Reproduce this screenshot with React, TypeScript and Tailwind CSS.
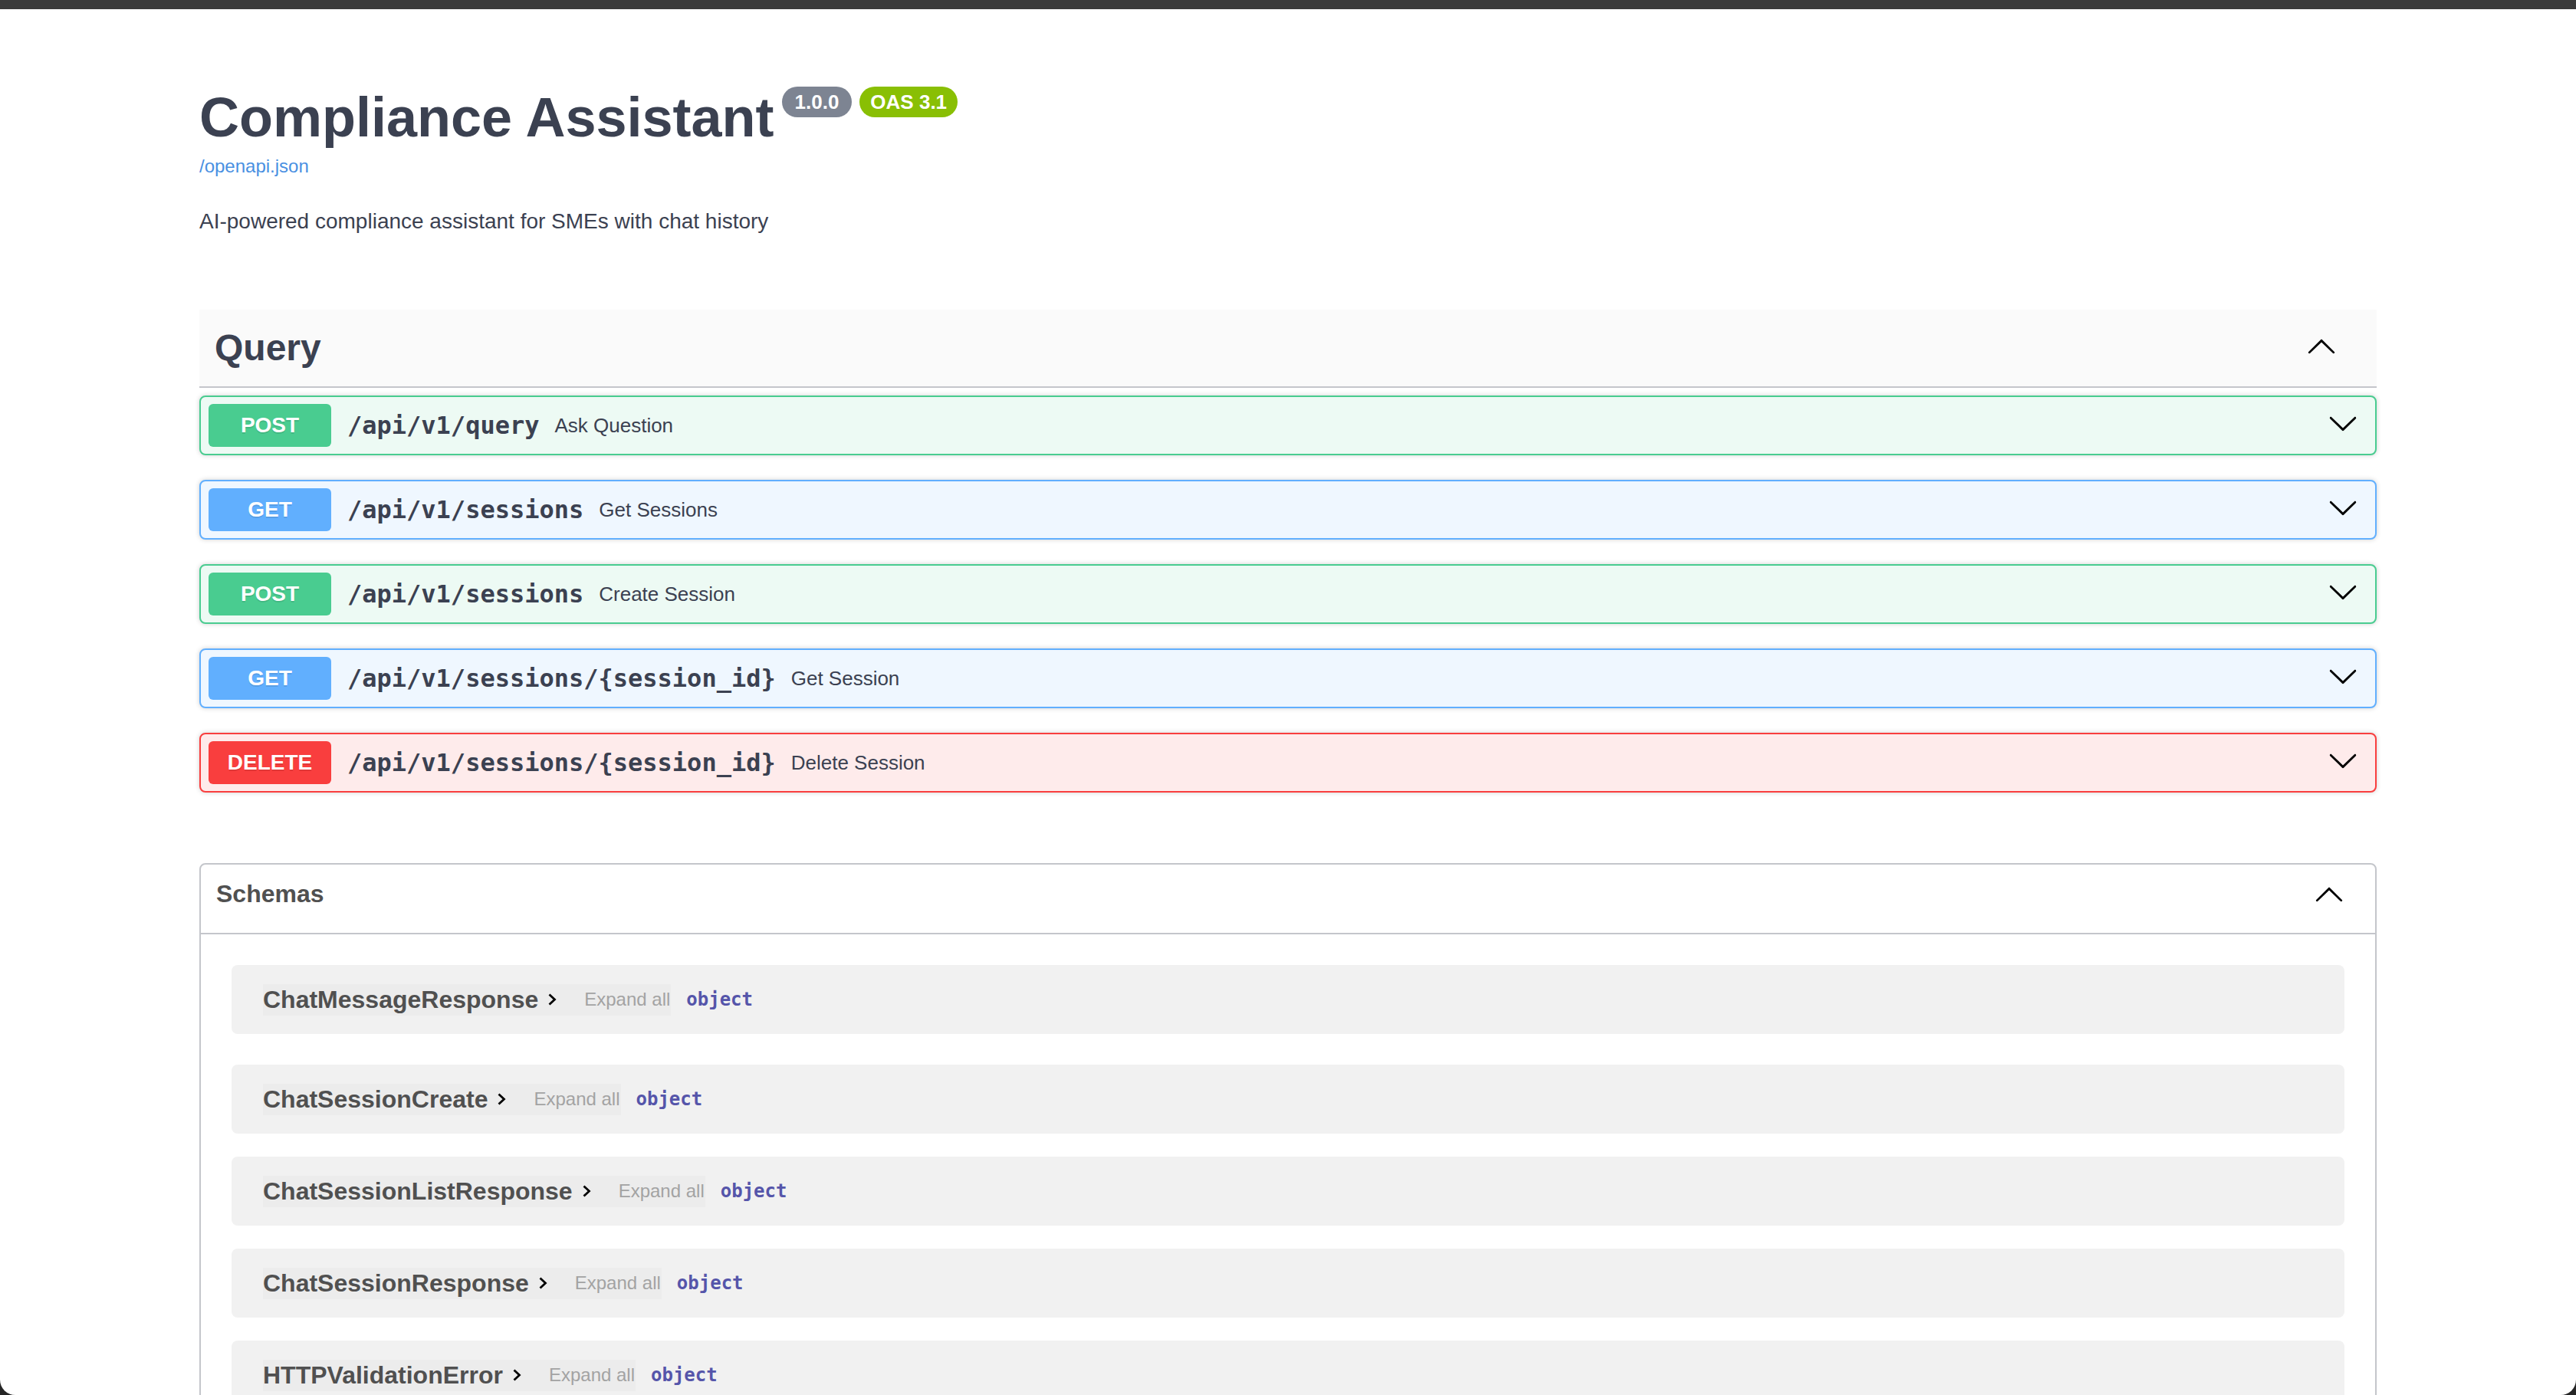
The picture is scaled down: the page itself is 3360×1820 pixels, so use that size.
import React from 'react';

// Swagger-style API docs page
type Method = 'GET' | 'POST' | 'DELETE';

const operations: { method: Method; path: string; summary: string }[] = [
  { method: 'POST', path: '/api/v1/query', summary: 'Ask Question' },
  { method: 'GET', path: '/api/v1/sessions', summary: 'Get Sessions' },
  { method: 'POST', path: '/api/v1/sessions', summary: 'Create Session' },
  { method: 'GET', path: '/api/v1/sessions/{session_id}', summary: 'Get Session' },
  { method: 'DELETE', path: '/api/v1/sessions/{session_id}', summary: 'Delete Session' },
];

const methodStyles: Record<Method, { row: string; badge: string }> = {
  POST: { row: 'border-[#49cc90] bg-[#edfaf4]', badge: 'bg-[#49cc90]' },
  GET: { row: 'border-[#61affe] bg-[#eff7ff]', badge: 'bg-[#61affe]' },
  DELETE: { row: 'border-[#f93e3e] bg-[#feebeb]', badge: 'bg-[#f93e3e]' },
};

const schemas = [
  'ChatMessageResponse',
  'ChatSessionCreate',
  'ChatSessionListResponse',
  'ChatSessionResponse',
  'HTTPValidationError',
];

function ArrowDown() {
  return (
    <svg width="40" height="40" viewBox="0 0 20 20" className="shrink-0">
      <path
        fill="#000"
        d="M17.418 6.109c.272-.268.709-.268.979 0s.271.701 0 .969l-7.908 7.83c-.27.268-.707.268-.979 0l-7.908-7.83c-.27-.268-.27-.701 0-.969.271-.268.709-.268.979 0L10 13.25l7.418-7.141z"
      />
    </svg>
  );
}

function ArrowUp() {
  return (
    <svg width="40" height="40" viewBox="0 0 20 20" className="shrink-0">
      <path
        fill="#000"
        d="M17.418 14.908c.272.268.709.268.979 0s.271-.701 0-.969l-7.908-7.83c-.27-.268-.707-.268-.979 0l-7.908 7.83c-.27.268-.27.701 0 .969.271.268.709.268.979 0L10 7.75l7.418 7.158z"
      />
    </svg>
  );
}

function ModelChevron() {
  return (
    <svg width="16" height="16" viewBox="0 0 16 16" className="ml-[10px] shrink-0">
      <path d="M4.5 1.5 L11.5 8 L4.5 14.5" fill="none" stroke="#000" strokeWidth="2.8" />
    </svg>
  );
}

export default function App() {
  return (
    <div className="h-[1820px] overflow-hidden bg-[#262626]">
      {/* window chrome strip */}
      <div className="h-[12px] bg-[#3b3b3b]" />

      <div className="h-[1808px] overflow-hidden rounded-b-[20px] bg-white font-['Liberation_Sans',Arial,sans-serif] text-[#3b4151]">
        <div className="mx-auto w-[2840px] pt-[101px]">
          {/* Info */}
          <div className="flex items-start">
            <h2 className="mt-[4px] text-[72px] leading-[72px] font-bold">Compliance Assistant</h2>
            <div className="ml-[10px] flex gap-[10px]">
              <span className="h-[40px] rounded-full bg-[#7d8492] px-[17px] text-[26px] leading-[40px] font-bold text-white">
                1.0.0
              </span>
              <span className="h-[40px] rounded-full bg-[#89bf04] px-[14px] text-[26px] leading-[40px] font-bold text-white">
                OAS 3.1
              </span>
            </div>
          </div>
          <a className="mt-[16px] block text-[24px] leading-[24px] text-[#4990e2]">/openapi.json</a>
          <p className="mt-[46px] text-[28px] leading-[28px]">
            AI-powered compliance assistant for SMEs with chat history
          </p>

          {/* Query tag */}
          <section className="mt-[101px]">
            <div className="flex h-[102px] items-center border-b-2 border-[#c4c6cb] bg-[#fafafa] pr-[52px] pl-[20px]">
              <h3 className="text-[48px] leading-[48px] font-bold">Query</h3>
              <div className="mb-[6px] ml-auto">
                <ArrowUp />
              </div>
            </div>

            <div className="mt-[10px] flex flex-col gap-[32px]">
              {operations.map((op, i) => (
                <div
                  key={i}
                  className={`flex h-[78px] items-center rounded-[8px] border-2 px-[10px] shadow-[0_0_6px_rgba(0,0,0,0.19)] ${methodStyles[op.method].row}`}
                >
                  <span
                    className={`flex h-[56px] w-[160px] shrink-0 items-center justify-center rounded-[6px] text-[28px] font-bold text-white [text-shadow:0_2px_0_rgba(0,0,0,0.1)] ${methodStyles[op.method].badge}`}
                  >
                    {op.method}
                  </span>
                  <span className="ml-[21px] font-['DejaVu_Sans_Mono',monospace] text-[32px] font-bold">
                    {op.path}
                  </span>
                  <span className="ml-[20px] text-[26px]">{op.summary}</span>
                  <div className="mr-[12px] mb-[6px] ml-auto">
                    <ArrowDown />
                  </div>
                </div>
              ))}
            </div>
          </section>

          {/* Schemas */}
          <section className="mt-[92px] rounded-[8px] border-2 border-[#c4c6cb]">
            <div className="flex h-[91px] items-center border-b-2 border-[#c4c6cb] pr-[40px] pb-[14px] pl-[20px]">
              <h4 className="text-[32px] leading-[32px] font-bold text-[#505050]">Schemas</h4>
              <div className="ml-auto">
                <ArrowUp />
              </div>
            </div>
            <div className="pt-[40px]">
              {schemas.map((name, i) => (
                <div
                  key={name}
                  className={`mx-[40px] flex h-[90px] items-center rounded-[8px] bg-[#f1f1f1] pl-[41px] ${i === 0 ? 'mb-[40px]' : 'mb-[30px]'}`}
                >
                  <span className="flex h-[41px] items-center bg-[rgba(0,0,0,0.02)] pr-[24px] text-[32px] font-bold text-[#505050]">
                    {name}
                    <ModelChevron />
                  </span>
                  <span className="flex h-[41px] items-center bg-[rgba(0,0,0,0.02)] pr-[1px] pl-[10px] text-[24px] text-[#a3a3a3]">
                    Expand all
                  </span>
                  <span className="ml-[20px] font-['DejaVu_Sans_Mono',monospace] text-[24px] font-bold text-[#55a]">
                    object
                  </span>
                </div>
              ))}
            </div>
          </section>
        </div>
      </div>
    </div>
  );
}
